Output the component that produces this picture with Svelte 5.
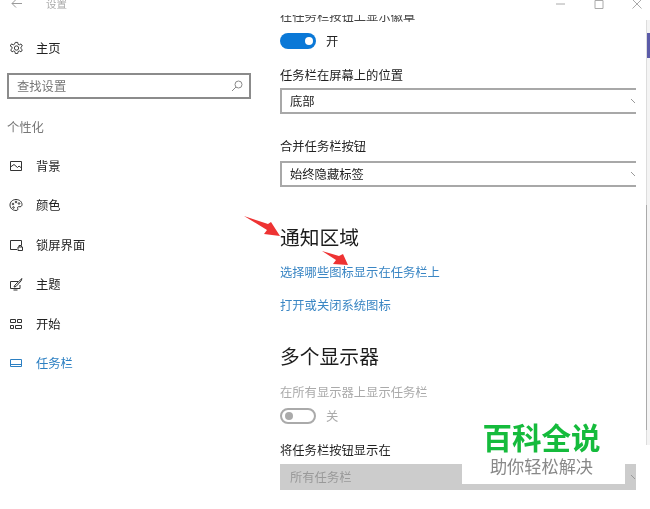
<script>
  const nav = [
    { label: '背景', icon: 'bg' },
    { label: '颜色', icon: 'color' },
    { label: '锁屏界面', icon: 'lock' },
    { label: '主题', icon: 'theme' },
    { label: '开始', icon: 'start' },
    { label: '任务栏', icon: 'bar', active: true }
  ];
</script>

<div class="win">
  <aside class="side">
    <div class="titlebar">
      <svg class="back" width="11" height="10" viewBox="0 0 11 10"><path d="M5 .5 1 4.500l4 4M1 4.500h10" fill="none" stroke="#9a9a9a" stroke-width="1"/></svg>
      <span class="apptitle">设置</span>
    </div>
    <div class="home">
      <svg width="15" height="15" viewBox="0 0 16 16" fill="none" stroke="#333" stroke-width="1"><path d="M6.700 1.500h2.600l.4 2 1.300.6 1.800-1 1.400 2.200-1.500 1.300v1.500l1.500 1.300-1.400 2.200-1.800-1-1.300.7-.4 2H6.700l-.4-2-1.300-.7-1.800 1-1.400-2.200 1.500-1.300V6.600L1.300 5.300l1.400-2.200 1.800 1 1.300-.6z"/><circle cx="8" cy="7.500" r="2.300"/></svg>
      <span>主页</span>
    </div>
    <div class="search">
      <span>查找设置</span>
      <svg width="12" height="12" viewBox="0 0 12 12" fill="none" stroke="#8a8a8a"><circle cx="7.500" cy="4.500" r="3.500"/><path d="M5 7 1 11"/></svg>
    </div>
    <div class="group">个性化</div>
    <nav>
      {#each nav as item}
        <div class="item" class:active={item.active}>
          <svg width="16" height="14" viewBox="0 0 16 14" fill="none" stroke={item.active ? '#2b7fc2' : '#333'} stroke-width="1">
            {#if item.icon === 'bg'}
              <path d="M2.500 2.500h11v9h-11zM2.500 8l3.500-2.500 3.500 3 1.500-1.500 2.500 2"/>
            {:else if item.icon === 'color'}
              <path d="M8 1.500c3.500 0 6 2.300 6 5 0 2-1.500 2.500-3 2.200-1.300-.2-1.800.7-1.300 1.800.5 1.200-.3 2-1.700 2-3.500 0-6-2.500-6-5.500s2.500-5.500 6-5.500z"/><circle cx="5" cy="6" r=".8"/><circle cx="8" cy="4" r=".8"/><circle cx="11" cy="5.500" r=".8"/><circle cx="5.500" cy="9.500" r=".8"/>
            {:else if item.icon === 'lock'}
              <path d="M9 11.500H2.500v-9h11V7M10 9h4.500v3.500H10zM11 9V7.500h2.500V9"/>
            {:else if item.icon === 'theme'}
              <path d="M10 4.500H2.500v7H12V8M5.500 13h4M6 10l1-2 7-6.500-1 2.500-5 5.500z"/>
            {:else if item.icon === 'start'}
              <path d="M2.500 2.500h5v3h-5zM9.500 2.500h4v3h-4zM2.500 8.500h3v3h-3zM7.500 8.500h6v3h-6z"/>
            {:else}
              <path d="M2.500 3.500h11v7h-11zM2.500 8.500h11"/>
            {/if}
          </svg>
          <span>{item.label}</span>
        </div>
      {/each}
    </nav>
  </aside>

  <main class="content">
    <div class="cut">在任务栏按钮上显示徽章</div>
    <div class="toggle-row">
      <span class="toggle on"><i></i></span>
      <span>开</span>
    </div>
    <div class="label first">任务栏在屏幕上的位置</div>
    <div class="select top"><span>底部</span><svg width="6" height="6" viewBox="0 0 6 6"><path d="M1 1l4 4" fill="none" stroke="#999"/></svg></div>
    <div class="label second">合并任务栏按钮</div>
    <div class="select"><span>始终隐藏标签</span><svg width="6" height="6" viewBox="0 0 6 6"><path d="M1 1l4 4" fill="none" stroke="#999"/></svg></div>
    <h2 class="h-notify">通知区域</h2>
    <a class="link one" href="#a">选择哪些图标显示在任务栏上</a>
    <a class="link two" href="#b">打开或关闭系统图标</a>
    <h2 class="h-multi">多个显示器</h2>
    <div class="label muted">在所有显示器上显示任务栏</div>
    <div class="toggle-row off-row">
      <span class="toggle off"><i></i></span>
      <span>关</span>
    </div>
    <div class="label third">将任务栏按钮显示在</div>
    <div class="select disabled"><span>所有任务栏</span><svg width="6" height="6" viewBox="0 0 6 6"><path d="M1 1l4 4" fill="none" stroke="#999"/></svg></div>
  </main>

  <div class="wincontrols">
    <svg width="12" height="12" viewBox="0 0 12 12"><path d="M1 6h9" stroke="#aaa"/></svg>
    <svg width="12" height="12" viewBox="0 0 12 12"><path d="M2 2.500h8v8H2z" fill="none" stroke="#aaa"/></svg>
    <svg width="12" height="12" viewBox="0 0 12 12"><path d="M1.500 1.500l9 9m0-9-9 9" stroke="#aaa"/></svg>
  </div>
  <div class="scroll"><i class="thumb"></i><i class="rail"></i></div>

  <svg class="arrows" width="130" height="70" viewBox="0 0 130 70">
    <path d="M9 11 33 19l3-2 9 14-16-2 3-4z" fill="#ee3333"/>
    <path d="M87 46 104 51l4-2 5 11-15-1 3-4z" fill="#ee3333"/>
  </svg>

  <div class="mark">
    <div class="mark-title">百科全说</div>
    <div class="mark-sub">助你轻松解决</div>
  </div>
</div>

<style>
  :global(body) { margin: 0; background: #fff; }
  .win {
    position: relative;
    width: 650px;
    height: 509px;
    overflow: hidden;
    display: flex;
    background: #fff;
    color: #222;
    font-family: "Noto Sans CJK SC", "Liberation Sans", sans-serif;
    font-size: 12.300px;
    filter: blur(0.35px);
  }
  .side { width: 280px; flex: none; }
  .titlebar { display: flex; align-items: center; height: 8px; padding-left: 11px; gap: 24px; color: #aaa; }
  .back { flex: none; }
  .apptitle { font-size: 10.500px; line-height: 8px; }
  .home { display: flex; align-items: center; gap: 12px; margin: 30px 0 0 9px; height: 20px; }
  .search {
    display: flex;
    align-items: center;
    justify-content: space-between;
    box-sizing: border-box;
    width: 244px;
    height: 26px;
    margin: 15px 0 0 7px;
    padding: 0 6px 0 8px;
    border: 2px solid #8b8b8b;
    color: #777;
  }
  .group { margin: 20px 0 0 7px; color: #777; line-height: 17px; }
  nav { margin-top: 10px; }
  .item { display: flex; align-items: center; gap: 12px; height: 39.500px; padding-left: 8px; }
  .item.active { color: #2b7fc2; }
  .content { position: relative; flex: 1; }
  .cut { height: 8px; margin-top: 15px; line-height: 3px; overflow: hidden; color: #444; }
  .toggle-row { display: flex; align-items: center; gap: 10px; height: 18px; margin-top: 9px; }
  .toggle {
    box-sizing: border-box;
    display: flex;
    align-items: center;
    width: 36px;
    height: 16px;
    border-radius: 8px;
    padding: 0 3px;
  }
  .toggle i { width: 8px; height: 8px; border-radius: 50%; display: block; }
  .on { background: #0a78d7; justify-content: flex-end; }
  .on i { background: #fff; }
  .off { border: 2px solid #aaa; }
  .off i { background: #aaa; }
  .label { line-height: 18px; }
  .first { margin-top: 16px; }
  .second { margin-top: 23px; }
  .select {
    box-sizing: border-box;
    display: flex;
    align-items: center;
    justify-content: space-between;
    width: 356px;
    height: 26px;
    margin-top: 6px;
    padding: 0 0 0 8px;
    border: 2px solid #a8a8a8;
    border-right: 0;
  }
  .select.top { margin-top: 4px; }
  h2 { margin: 0; font-weight: 400; font-size: 19.800px; line-height: 26px; color: #1c1c1c; }
  .h-notify { margin-top: 37px; }
  .link { display: block; color: #3a86c4; text-decoration: none; line-height: 18px; }
  .one { margin-top: 13px; }
  .two { margin-top: 15px; }
  .h-multi { margin-top: 29px; }
  .muted { margin-top: 14px; color: #aaa; }
  .off-row { margin-top: 6px; color: #aaa; }
  .third { margin-top: 16px; }
  .disabled { background: #ccc; border: 0; color: #999; margin-top: 5px; padding-left: 10px; }
  .wincontrols { position: absolute; top: -2px; right: 7px; display: flex; gap: 26px; }
  .scroll { position: absolute; top: 20px; right: 0; height: 425px; width: 3px; border-left: 1px solid #ddd; background: #f4f4f4; }
  .thumb { position: absolute; left: 0; top: 13px; width: 3px; height: 25px; background: #5b5ba8; }
  .rail { position: absolute; left: -1px; top: 185px; width: 1px; height: 225px; background: #aaa; }
  .arrows { position: absolute; left: 235px; top: 205px; }
  .mark {
    position: absolute;
    left: 462px;
    top: 418px;
    width: 163px;
    height: 66px;
    background: #fff;
    text-align: center;
  }
  .mark-title { color: #15bb3c; font-size: 29.500px; font-weight: 700; line-height: 36px; padding-right: 4px; }
  .mark-sub { color: #888; font-size: 17.200px; line-height: 24px; padding-right: 4px; }
</style>
